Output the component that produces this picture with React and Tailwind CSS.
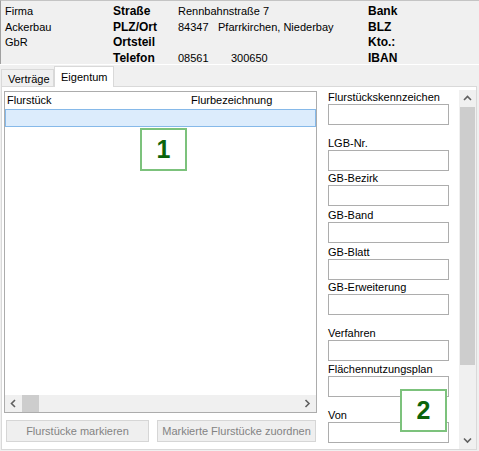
import React from "react";

const fields = [
  { label: "Flurstückskennzeichen", mt: "mt-[4px]" },
  { label: "LGB-Nr.", mt: "mt-[12px]" },
  { label: "GB-Bezirk", mt: "mt-[1px]" },
  { label: "GB-Band", mt: "mt-[3px]" },
  { label: "GB-Blatt", mt: "mt-[3px]" },
  { label: "GB-Erweiterung", mt: "mt-[1px]" },
  { label: "Verfahren", mt: "mt-[12px]" },
  { label: "Flächennutzungsplan", mt: "mt-[2px]" },
  { label: "Von", mt: "mt-[12px]" },
];

const Chevron = ({ dir }) => {
  const paths = {
    up: "M1 5 L4.5 1.5 L8 5",
    down: "M1 1.5 L4.5 5 L8 1.5",
    left: "M5 1 L1.5 4.5 L5 8",
    right: "M1.5 1 L5 4.5 L1.5 8",
  };
  const horiz = dir === "left" || dir === "right";
  return (
    <svg
      width={horiz ? 7 : 9}
      height={horiz ? 9 : 7}
      viewBox={horiz ? "0 0 7 9" : "0 0 9 7"}
      fill="none"
      stroke="#606060"
      strokeWidth="1.6"
    >
      <path d={paths[dir]} />
    </svg>
  );
};

const Marker = ({ n, className }) => (
  <div
    className={`absolute w-[47px] h-[43px] border-2 border-[#7cc27c] bg-white flex items-center justify-center text-[25px] font-bold text-[#0b640b] ${className}`}
  >
    {n}
  </div>
);

export default function App() {
  return (
    <div className="relative w-[479px] h-[451px] overflow-hidden bg-[#f0f0f0] text-[11px] leading-[13px] text-black font-['Liberation_Sans',Arial,sans-serif] flex flex-col">
      {/* Kopfdaten */}
      <div className="h-[64px] border-t border-l border-t-[#c4c4c4] border-l-[#a0a0a0] grid grid-cols-[112px_65px_190px_1fr] grid-rows-[15px_16px_15px_16px] pt-[3px] items-center">
        <span className="pl-[4px]">Firma</span>
        <b className="text-[12px]">Straße</b>
        <span>Rennbahnstraße 7</span>
        <b className="text-[12px]">Bank</b>

        <span className="pl-[4px]">Ackerbau</span>
        <b className="text-[12px]">PLZ/Ort</b>
        <span className="flex">
          <span className="w-[40px]">84347</span>
          <span>Pfarrkirchen, Niederbay</span>
        </span>
        <b className="text-[12px]">BLZ</b>

        <span className="pl-[4px]">GbR</span>
        <b className="text-[12px]">Ortsteil</b>
        <span></span>
        <b className="text-[12px]">Kto.:</b>

        <span></span>
        <b className="text-[12px]">Telefon</b>
        <span className="flex">
          <span className="w-[53px]">08561</span>
          <span>300650</span>
        </span>
        <b className="text-[12px]">IBAN</b>
      </div>
      <div className="h-px bg-white" />

      {/* Reiter */}
      <div className="h-[21px] flex items-end pl-[1px]">
        <div className="h-[17px] w-[53px] border border-b-0 border-[#d9d9d9] bg-[#f0f0f0] pl-[6px] pt-[3px]">
          Verträge
        </div>
        <div className="relative z-10 -mb-px h-[21px] w-[60px] border border-b-0 border-[#d9d9d9] bg-white pl-[6px] pt-[4px]">
          Eigentum
        </div>
      </div>

      {/* Registerseite */}
      <div className="relative h-[364px] w-[476px] ml-[1px] border border-[#d9d9d9] bg-white flex pl-[2px]">
        <div className="w-[313px] pt-[4px] flex flex-col">
          <div className="h-[322px] border border-[#acacac] flex flex-col">
            <div className="h-[17px] flex items-center">
              <span className="w-[186px] pl-[2px]">Flurstück</span>
              <span>Flurbezeichnung</span>
            </div>
            <div className="h-[18px] border border-[#86b9e9] bg-[#dcecfc]" />
            <div className="flex-1" />
            <div className="h-[17px] bg-[#f0f0f0] flex items-center">
              <div className="w-[17px] flex justify-center">
                <Chevron dir="left" />
              </div>
              <div className="w-[17px] h-full bg-[#cdcdcd]" />
              <div className="flex-1" />
              <div className="w-[17px] flex justify-center">
                <Chevron dir="right" />
              </div>
            </div>
          </div>
          <div className="mt-[7px] ml-[2px] flex gap-[8px]">
            <button
              disabled
              className="w-[143px] h-[22px] border border-[#d6d6d6] bg-[#efefef] text-[#838383]"
            >
              Flurstücke markieren
            </button>
            <button
              disabled
              className="w-[159px] h-[22px] border border-[#d6d6d6] bg-[#efefef] text-[#838383]"
            >
              Markierte Flurstücke zuordnen
            </button>
          </div>
        </div>

        <div className="ml-[11px] w-[121px]">
          {fields.map((f) => (
            <div key={f.label} className={f.mt}>
              <div className="h-[13px]">{f.label}</div>
              <div className="h-[21px] border border-[#adadad] bg-white" />
            </div>
          ))}
        </div>

        <div className="ml-[10px] mt-[3px] w-[17px] bg-[#f0f0f0] flex flex-col">
          <div className="h-[17px] flex items-center justify-center">
            <Chevron dir="up" />
          </div>
          <div className="h-[258px] mx-[1px] bg-[#cdcdcd]" />
          <div className="flex-1" />
          <div className="h-[17px] flex items-center justify-center">
            <Chevron dir="down" />
          </div>
        </div>

        <Marker n="1" className="left-[138px] top-[41px]" />
        <Marker n="2" className="left-[398px] top-[302px]" />
      </div>
    </div>
  );
}
